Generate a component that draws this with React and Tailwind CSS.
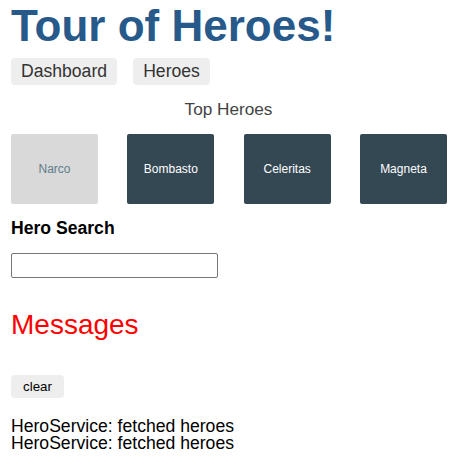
export default function App() {
  const heroes = ["Narco", "Bombasto", "Celeritas", "Magneta"];
  return (
    <div className="min-h-[466px] bg-white pl-[11px] pr-[10px]" style={{ fontFamily: '"Liberation Sans", Arial, sans-serif' }}>
      <h1 className="mt-[1px] text-[44px] leading-[50px] font-bold text-[#27598b]">Tour of Heroes!</h1>
      <nav className="mt-[7px] flex gap-[16px]">
        <a className="flex h-[27px] w-[106px] items-center justify-center rounded-[4px] bg-[#eeeeee] text-[17.6px] text-[#333333]">Dashboard</a>
        <a className="flex h-[27px] w-[77px] items-center justify-center rounded-[4px] bg-[#eeeeee] text-[17.6px] text-[#333333]">Heroes</a>
      </nav>
      <h3 className="-ml-[11px] -mr-[10px] mt-[14px] text-center text-[17.2px] leading-[20px] text-[#444444]">Top Heroes</h3>
      <div className="mt-[15px] flex justify-between">
        {heroes.map((h, i) => (
          <div
            key={h}
            className={
              i === 0
                ? "flex h-[70px] w-[87px] items-center justify-center rounded-[2px] bg-[#d9d9d9] text-[12px] text-[#607d8b]"
                : "flex h-[70px] w-[87px] items-center justify-center rounded-[2px] bg-[#344854] text-[12px] text-white"
            }
          >
            {h}
          </div>
        ))}
      </div>
      <h4 className="mt-[14px] text-[17.6px] leading-[20px] font-bold text-black">Hero Search</h4>
      <input className="mt-[15px] block h-[25px] w-[207px] rounded-[2px] border border-[#767676] bg-white" />
      <h2 className="mt-[31px] text-[28px] leading-[32px] text-[#ff0000]">Messages</h2>
      <button className="mt-[34px] flex h-[23px] w-[53px] items-center justify-center rounded-[4px] bg-[#eeeeee] text-[13.33px] text-black">clear</button>
      <div className="mt-[20px] text-[17.6px] leading-[16.8px] text-black">
        <div>HeroService: fetched heroes</div>
        <div>HeroService: fetched heroes</div>
      </div>
    </div>
  );
}
